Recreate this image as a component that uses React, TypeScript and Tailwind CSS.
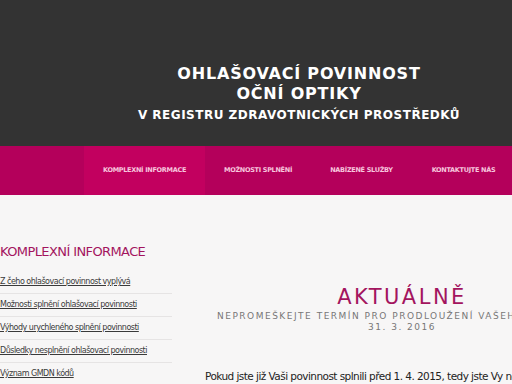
const navItems = [
    { label: "KOMPLEXNÍ INFORMACE", w: "w-[121px]", active: true },
    { label: "MOŽNOSTI SPLNĚNÍ", w: "w-[106px]", active: false },
    { label: "NABÍZENÉ SLUŽBY", w: "w-[101px]", active: false },
    { label: "KONTAKTUJTE NÁS", w: "w-[103px]", active: false },
];

const links = [
    "Z čeho ohlašovací povinnost vyplývá",
    "Možnosti splnění ohlašovací povinnosti",
    "Výhody urychleného splnění povinnosti",
    "Důsledky nesplnění ohlašovací povinnosti",
    "Význam GMDN kódů",
];

export default function App() {
    return (
        <div className="w-[512px] h-[384px] overflow-hidden bg-[#f7f6f6] font-['DejaVu_Sans',sans-serif]">
            <header className="h-[146px] bg-[#333333] pt-[64px] pl-[86px] text-center text-white font-bold">
                <div className="text-[16px] leading-[20px] tracking-[0.8px]">OHLAŠOVACÍ POVINNOST</div>
                <div className="text-[16px] leading-[20px] tracking-[0.8px]">OČNÍ OPTIKY</div>
                <div className="mt-[1px] text-[12px] leading-[20px] tracking-[0.5px] whitespace-nowrap">
                    V REGISTRU ZDRAVOTNICKÝCH PROSTŘEDKŮ
                </div>
            </header>

            <nav className="flex h-[49px] bg-[#b4005b]">
                <div className="w-[84px] shrink-0" />
                {navItems.map((item) => (
                    <a
                        key={item.label}
                        className={`${item.w} shrink-0 flex items-center justify-center whitespace-nowrap text-[6.5px] tracking-[-0.3px] font-bold text-[#f7c6de] ${item.active ? "bg-[#c2005f]" : ""}`}
                    >
                        {item.label}
                    </a>
                ))}
            </nav>

            <div className="flex">
                <aside className="w-[172px] shrink-0 pt-[48px]">
                    <h2 className="text-[13px] leading-[18px] text-[#a3145e] whitespace-nowrap tracking-[-0.6px]">
                        KOMPLEXNÍ INFORMACE
                    </h2>
                    <ul className="mt-[10px]">
                        {links.map((l) => (
                            <li key={l} className="h-[23px] flex items-center border-b border-[#e6e4e4]">
                                <a className="text-[8px] text-[#3a3a3a] underline whitespace-nowrap tracking-[-0.5px]">{l}</a>
                            </li>
                        ))}
                    </ul>
                </aside>

                <main className="w-[460px] shrink-0 pt-[90px] text-center">
                    <h1 className="text-[21px] leading-[24px] tracking-[2.5px] text-[#a3145e]">AKTUÁLNĚ</h1>
                    <p className="mt-[2px] pl-[45px] text-left text-[9px] leading-[11px] tracking-[1.5px] text-[#777] whitespace-nowrap">
                        NEPROMEŠKEJTE TERMÍN PRO PRODLOUŽENÍ VAŠEHO
                    </p>
                    <p className="text-[9px] leading-[11px] tracking-[1.5px] text-[#777]">31. 3. 2016</p>
                    <p className="mt-[36px] pl-[33px] text-left text-[10.5px] leading-[14px] tracking-[-0.55px] text-[#222] whitespace-nowrap">
                        Pokud jste již Vaši povinnost splnili před 1. 4. 2015, tedy jste Vy nebyli
                    </p>
                </main>
            </div>
        </div>
    );
}
